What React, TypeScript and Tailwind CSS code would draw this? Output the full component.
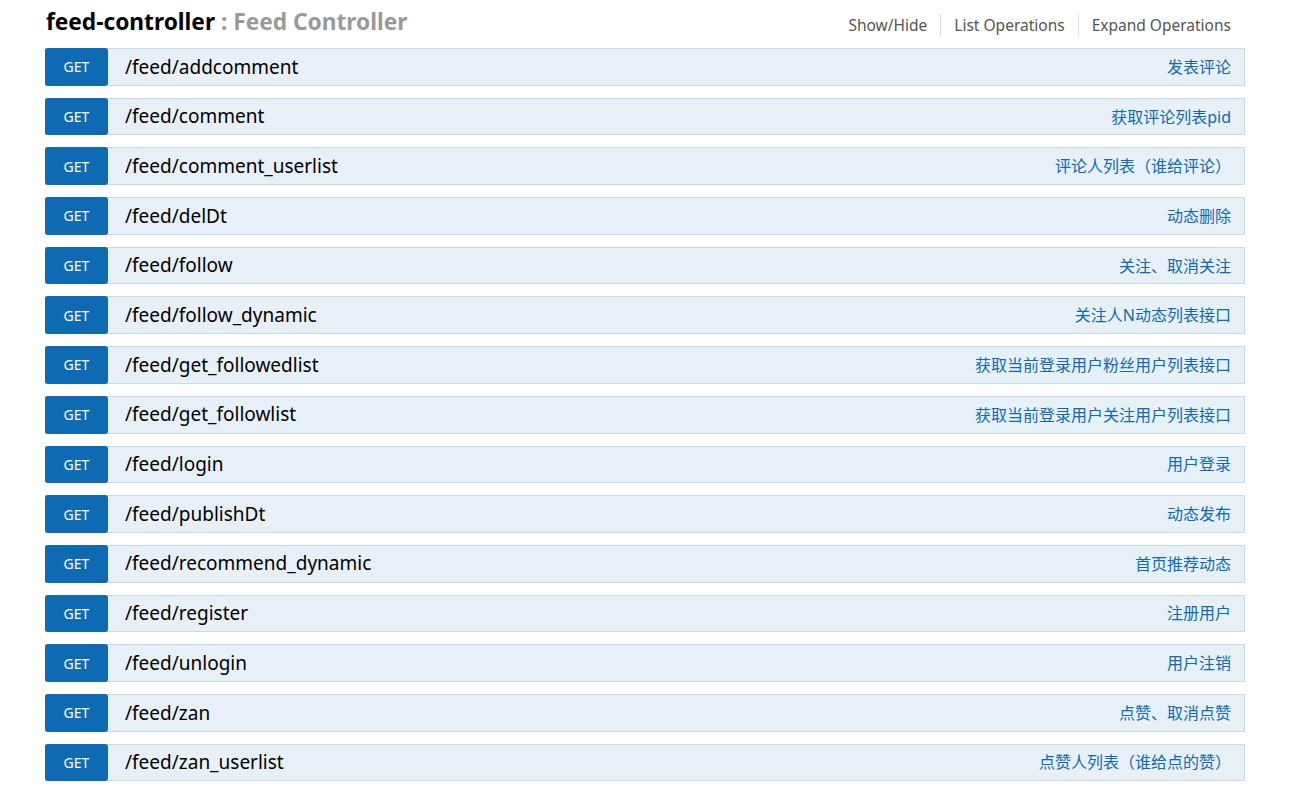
const ops: [string, string][] = [
  ["/feed/addcomment", "发表评论"],
  ["/feed/comment", "获取评论列表pid"],
  ["/feed/comment_userlist", "评论人列表（谁给评论）"],
  ["/feed/delDt", "动态删除"],
  ["/feed/follow", "关注、取消关注"],
  ["/feed/follow_dynamic", "关注人N动态列表接口"],
  ["/feed/get_followedlist", "获取当前登录用户粉丝用户列表接口"],
  ["/feed/get_followlist", "获取当前登录用户关注用户列表接口"],
  ["/feed/login", "用户登录"],
  ["/feed/publishDt", "动态发布"],
  ["/feed/recommend_dynamic", "首页推荐动态"],
  ["/feed/register", "注册用户"],
  ["/feed/unlogin", "用户注销"],
  ["/feed/zan", "点赞、取消点赞"],
  ["/feed/zan_userlist", "点赞人列表（谁给点的赞）"],
];

const font = "font-['Noto_Sans','Noto_Sans_CJK_SC',sans-serif]";

function Endpoint({ path, summary }: { path: string; summary: string }) {
  return (
    <li className="flex h-[37.7px] items-center border border-[#c3d9ec] bg-[#e7f0f7]">
      <span className="-my-px -ml-px flex h-[calc(100%+2px)] w-[63px] flex-none items-center justify-center rounded-[3px] bg-[#0f6ab4] text-[14px] text-white">
        GET
      </span>
      <span className="ml-[17px] grow text-[19px] text-black">{path}</span>
      <span className="mr-[13px] text-[16px] text-[#0f6ab4]">{summary}</span>
    </li>
  );
}

export default function App() {
  return (
    <main className={cn(font, "min-h-screen bg-white px-[45px] pb-4")}>
      <div className="w-[1200px]">
        <header className="flex h-[48px] items-center justify-between">
          <h2 className="pb-[3px] pl-px text-[22.7px] font-bold leading-none">
            <span className="text-black">feed-controller</span>
            <span className="text-[#999]"> : Feed Controller</span>
          </h2>
          <ul className="mr-[14px] flex items-center pt-[2px] text-[15.5px] text-[#555]">
            <li className="border-r border-[#ddd] pr-[13px] leading-[22px]">Show/Hide</li>
            <li className="border-r border-[#ddd] px-[13px] leading-[22px]">List Operations</li>
            <li className="pl-[13px] leading-[22px]">Expand Operations</li>
          </ul>
        </header>
        <ul className="flex flex-col gap-[12px]">
          {ops.map(([p, s]) => (
            <Endpoint key={p} path={p} summary={s} />
          ))}
        </ul>
      </div>
    </main>
  );
}

function cn(...c: string[]) {
  return c.join(" ");
}
